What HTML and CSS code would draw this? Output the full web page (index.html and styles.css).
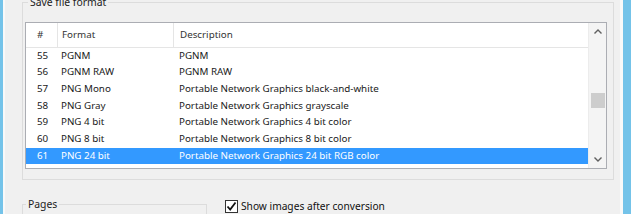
FILE: index.html
```html
<!DOCTYPE html>
<html lang="en">
    <head>
        <meta charset="UTF-8">
        <title>Save file format</title>
        <link rel="stylesheet" href="styles.css">
    </head>
    <body>
        <div class="window">
            <div class="inner">
                <fieldset class="group format-group">
                    <legend>Save file format</legend>
                    <div class="listview">
                        <div class="table">
                            <div class="row header">
                                <div class="c1">#</div>
                                <div class="c2">Format</div>
                                <div class="c3">Description</div>
                            </div>
                            <div class="row"><div class="c1">55</div><div class="c2">PGNM</div><div class="c3">PGNM</div></div>
                            <div class="row"><div class="c1">56</div><div class="c2">PGNM RAW</div><div class="c3">PGNM RAW</div></div>
                            <div class="row"><div class="c1">57</div><div class="c2">PNG Mono</div><div class="c3">Portable Network Graphics black-and-white</div></div>
                            <div class="row"><div class="c1">58</div><div class="c2">PNG Gray</div><div class="c3">Portable Network Graphics grayscale</div></div>
                            <div class="row"><div class="c1">59</div><div class="c2">PNG 4 bit</div><div class="c3">Portable Network Graphics 4 bit color</div></div>
                            <div class="row"><div class="c1">60</div><div class="c2">PNG 8 bit</div><div class="c3">Portable Network Graphics 8 bit color</div></div>
                            <div class="row selected"><div class="c1">61</div><div class="c2">PNG 24 bit</div><div class="c3">Portable Network Graphics 24 bit RGB color</div></div>
                        </div>
                        <div class="scrollbar">
                            <div class="arrow">
                                <svg width="8" height="5" viewBox="0 0 8 5"><path d="M0.5 4.5 L4 1 L7.5 4.5" fill="none" stroke="#606060" stroke-width="1.4"/></svg>
                            </div>
                            <div class="track">
                                <div class="thumb"></div>
                            </div>
                            <div class="arrow">
                                <svg width="8" height="5" viewBox="0 0 8 5"><path d="M0.5 0.5 L4 4 L7.5 0.5" fill="none" stroke="#606060" stroke-width="1.4"/></svg>
                            </div>
                        </div>
                    </div>
                </fieldset>

                <div class="bottom">
                    <fieldset class="group pages-group">
                        <legend>Pages</legend>
                    </fieldset>
                    <label class="check">
                        <span class="box">
                            <svg width="11" height="11" viewBox="0 0 11 11"><path d="M1.5 5.5 L4.2 8.5 L9.5 1.5" fill="none" stroke="#111" stroke-width="1.8"/></svg>
                        </span>
                        Show images after conversion
                    </label>
                </div>
            </div>
        </div>
    </body>
</html>
```

FILE: styles.css
```css
body {
    margin: 0;
    padding: 0;
    background-color: #f0f0f0;
    font-family: "Noto Sans", sans-serif;
    font-size: 9.8px;
    color: #1a1a1a;
    overflow: hidden;
}

.window {
    height: 214px;
    border-left: 3px solid #74c3e9;
    border-right: 8px solid #74c3e9;
    overflow: hidden;
}

.inner {
    height: 214px;
    border-left: 2px solid #f9f9f9;
    border-right: 3px solid #f9f9f9;
    padding: 0 6px 0 17px;
    overflow: hidden;
}

.group {
    border: 1px solid #dcdcdc;
    margin: 0;
    padding: 0;
}

.group legend {
    margin-left: 3px;
    padding: 0 2px;
    font-size: 10.4px;
    line-height: 14px;
    color: #222;
}

.format-group {
    margin-top: -5px;
    padding: 13px 6px 10px 2px;
}

.listview {
    display: flex;
    height: 145px;
    border: 1px solid #abadb3;
    background: #fff;
}

.table {
    flex: 1;
}

.row {
    display: grid;
    grid-template-columns: 31px 116px 1fr;
    height: 16.67px;
    line-height: 16.67px;
    white-space: nowrap;
}

.row.header {
    height: 24.67px;
    line-height: 24px;
    border-bottom: 1px solid #e5e5e5;
    box-sizing: border-box;
    color: #333;
}

.row.header div + div {
    border-left: 1px solid #e5e5e5;
}

.c1 {
    padding-left: 11px;
}

.c2 {
    padding-left: 4px;
}

.c3 {
    padding-left: 6px;
}

.row.selected {
    background: #3399ff;
    color: #fff;
}

.scrollbar {
    width: 17px;
    display: flex;
    flex-direction: column;
    background: #f4f4f4;
    border-left: 1px solid #ececec;
}

.arrow {
    height: 17px;
    display: flex;
    align-items: center;
    justify-content: center;
}

.track {
    flex: 1;
    padding-top: 53px;
}

.thumb {
    height: 15px;
    margin: 0 1px 0 2px;
    background: #cdcdcd;
}

.bottom {
    display: flex;
    align-items: flex-start;
    margin-top: 18px;
}

.pages-group {
    width: 183px;
    height: 40px;
    margin-top: -1px;
}

.check {
    display: flex;
    align-items: center;
    margin-left: 18px;
    margin-top: 1px;
    font-size: 10.2px;
    color: #111;
}

.box {
    width: 11px;
    height: 11px;
    border: 1px solid #333;
    background: #fff;
    margin-right: 3px;
    display: flex;
}
```
